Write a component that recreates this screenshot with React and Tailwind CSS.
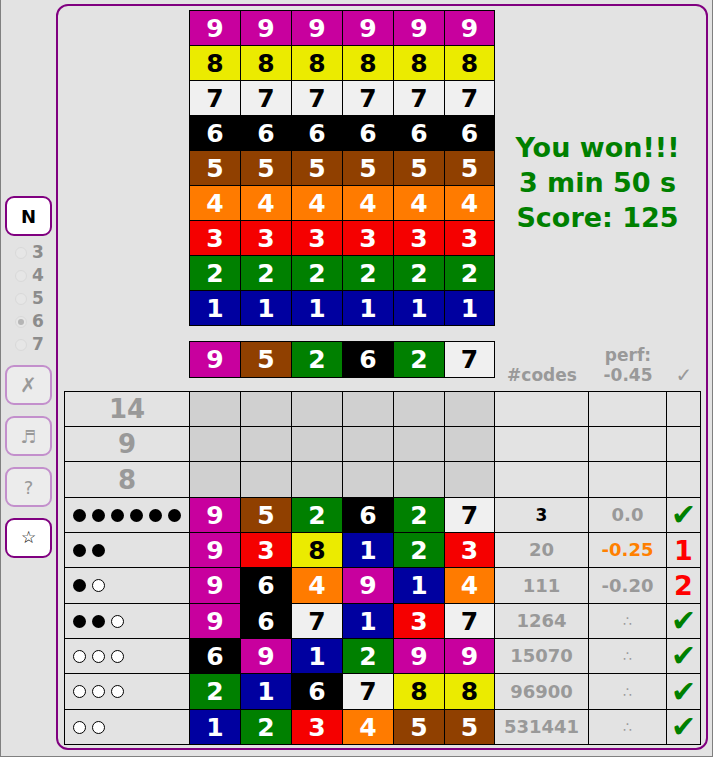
import React from "react";

// colour for each digit: [background, text]
const COLORS = {
    9: ["bg-[#c8009e]", "text-white"],
    8: ["bg-[#ebeb00]", "text-black"],
    7: ["bg-[#f0f0f0]", "text-black"],
    6: ["bg-black", "text-white"],
    5: ["bg-[#904000]", "text-white"],
    4: ["bg-[#ff7b00]", "text-white"],
    3: ["bg-[#f50000]", "text-white"],
    2: ["bg-[#008000]", "text-white"],
    1: ["bg-[#0000a0]", "text-white"],
};

const secret = [9, 5, 2, 6, 2, 7];

const guesses = [
    { black: 6, white: 0, code: [9, 5, 2, 6, 2, 7], count: "3", countDark: true, perf: "0.0", perfColor: "text-[#999]", mark: "ok" },
    { black: 2, white: 0, code: [9, 3, 8, 1, 2, 3], count: "20", perf: "-0.25", perfColor: "text-[#ff8000]", mark: "1" },
    { black: 1, white: 1, code: [9, 6, 4, 9, 1, 4], count: "111", perf: "-0.20", perfColor: "text-[#999]", mark: "2" },
    { black: 2, white: 1, code: [9, 6, 7, 1, 3, 7], count: "1264", perf: "∴", mark: "ok" },
    { black: 0, white: 3, code: [6, 9, 1, 2, 9, 9], count: "15070", perf: "∴", mark: "ok" },
    { black: 0, white: 3, code: [2, 1, 6, 7, 8, 8], count: "96900", perf: "∴", mark: "ok" },
    { black: 0, white: 2, code: [1, 2, 3, 4, 5, 5], count: "531441", perf: "∴", mark: "ok" },
];

const font = "font-['DejaVu_Sans','Verdana',sans-serif]";
const colCells = "grid-cols-[50px_50px_50px_50px_50px_49px]";

const Digit = ({ n, h = "h-[34px]" }) => {
    const [bg, fg] = COLORS[n];
    return (
        <div className={`${h} ${bg} ${fg} flex items-center justify-center text-[25px] font-bold leading-none`}>
            {n}
        </div>
    );
};

const SideButton = ({ children, active, className = "" }) => (
    <div
        className={`w-[47px] h-[40px] rounded-[9px] border-2 flex items-center justify-center ${
            active ? "border-[#800080] bg-white text-black" : "border-[#c38fcc] bg-[#ececec] text-[#999]"
        } ${className}`}
    >
        {children}
    </div>
);

const Pegs = ({ black, white }) => (
    <div className="flex items-center gap-[6px] pl-[8px]">
        {Array.from({ length: black }).map((_, i) => (
            <div key={"b" + i} className="w-[13px] h-[13px] rounded-full bg-black" />
        ))}
        {Array.from({ length: white }).map((_, i) => (
            <div key={"w" + i} className="w-[13px] h-[13px] rounded-full bg-white border border-black" />
        ))}
    </div>
);

const App = () => {
    const rowH = ["h-[34px]", "h-[34px]", "h-[35px]", "h-[34px]", "h-[34px]", "h-[35px]", "h-[34px]", "h-[34px]", "h-[35px]", "h-[34px]"];
    const empty = ["14", "9", "8"];

    return (
        <div className={`w-[713px] h-[757px] bg-[#e3e3e3] border-l border-r border-b border-[#808080] flex pt-[4px] ${font}`}>
            {/* left sidebar */}
            <div className="w-[55px] h-[746px] flex flex-col justify-center pl-[4px]">
                <SideButton active className="text-[18px] font-bold">N</SideButton>
                <div className="mt-[5px] flex flex-col">
                    {[3, 4, 5, 6, 7].map((n) => (
                        <div key={n} className="h-[23px] flex items-center pl-[10px] gap-[5px]">
                            <div className="w-[12px] h-[12px] rounded-full border border-[#d9d9d9] bg-[#e6e6e6] flex items-center justify-center">
                                {n === 6 && <div className="w-[6px] h-[6px] rounded-full bg-[#b5b5b5]" />}
                            </div>
                            <span className="text-[17px] font-bold text-[#8c8c8c] leading-none">{n}</span>
                        </div>
                    ))}
                </div>
                <SideButton className="mt-[9px] text-[20px]">✗</SideButton>
                <SideButton className="mt-[11px] text-[18px]">♬</SideButton>
                <SideButton className="mt-[11px] text-[18px]">?</SideButton>
                <SideButton active className="mt-[11px] text-[17px]">☆</SideButton>
            </div>

            {/* main panel */}
            <div className="w-[652px] h-[746px] border-2 border-[#800080] rounded-[12px] pl-[6px] pt-[4px]">
                {/* colour palette + result */}
                <div className="flex">
                    <div className="w-[125px]" />
                    <div className={`grid ${colCells} gap-px p-px bg-black`}>
                        {[9, 8, 7, 6, 5, 4, 3, 2, 1].map((n) =>
                            [0, 1, 2, 3, 4, 5].map((c) => <Digit key={n + "-" + c} n={n} />)
                        )}
                    </div>
                    <div className="w-[205px] flex flex-col items-center pt-[120px] text-[#008000] text-[27px] font-bold leading-[35px]">
                        <div>You won!!!</div>
                        <div>3 min 50 s</div>
                        <div>Score: 125</div>
                    </div>
                </div>

                {/* secret code + headers */}
                <div className="flex items-start mt-[15px]">
                    <div className="w-[125px]" />
                    <div className={`grid ${colCells} gap-px p-px bg-black`}>
                        {secret.map((n, i) => (
                            <Digit key={i} n={n} h="h-[35px]" />
                        ))}
                    </div>
                    <div className="flex items-end pt-[4px] text-[#999] font-bold text-[17px] leading-[20px]">
                        <div className="w-[94px] text-center">#codes</div>
                        <div className="w-[78px] text-center">
                            <div>perf:</div>
                            <div>-0.45</div>
                        </div>
                        <div className="w-[34px] text-center text-[20px]">✓</div>
                    </div>
                </div>

                {/* guesses table */}
                <div className="mt-[6px] w-fit grid grid-cols-[124px_50px_50px_50px_50px_50px_49px_93px_77px_33px] gap-px p-px bg-black">
                    {empty.map((label, r) => (
                        <React.Fragment key={"e" + r}>
                            <div className={`${rowH[r]} bg-[#e3e3e3] flex items-center justify-center text-[26px] font-bold text-[#999] leading-none`}>
                                {label}
                            </div>
                            {[0, 1, 2, 3, 4, 5].map((c) => (
                                <div key={c} className={`${rowH[r]} bg-[#d0d0d0]`} />
                            ))}
                            <div className={`${rowH[r]} bg-[#e3e3e3]`} />
                            <div className={`${rowH[r]} bg-[#e3e3e3]`} />
                            <div className={`${rowH[r]} bg-[#e3e3e3]`} />
                        </React.Fragment>
                    ))}
                    {guesses.map((g, i) => {
                        const h = rowH[i + 3];
                        return (
                            <React.Fragment key={"g" + i}>
                                <div className={`${h} bg-[#e3e3e3] flex items-center`}>
                                    <Pegs black={g.black} white={g.white} />
                                </div>
                                {g.code.map((n, c) => (
                                    <Digit key={c} n={n} h={h} />
                                ))}
                                <div
                                    className={`${h} bg-[#e3e3e3] flex items-center justify-center font-bold leading-none ${
                                        g.countDark ? "text-black text-[17px]" : "text-[#999] text-[18px]"
                                    }`}
                                >
                                    {g.count}
                                </div>
                                <div
                                    className={`${h} bg-[#e3e3e3] flex items-center justify-center font-bold leading-none ${
                                        g.perf === "∴" ? "text-[#999] text-[14px] font-normal" : `${g.perfColor} text-[18px]`
                                    }`}
                                >
                                    {g.perf}
                                </div>
                                <div className={`${h} bg-[#e3e3e3] flex items-center justify-center font-bold leading-none`}>
                                    {g.mark === "ok" ? (
                                        <span className="text-[#008000] text-[30px]">✔</span>
                                    ) : (
                                        <span className="text-[#f00] text-[27px]">{g.mark}</span>
                                    )}
                                </div>
                            </React.Fragment>
                        );
                    })}
                </div>
            </div>
        </div>
    );
};

export default App;
